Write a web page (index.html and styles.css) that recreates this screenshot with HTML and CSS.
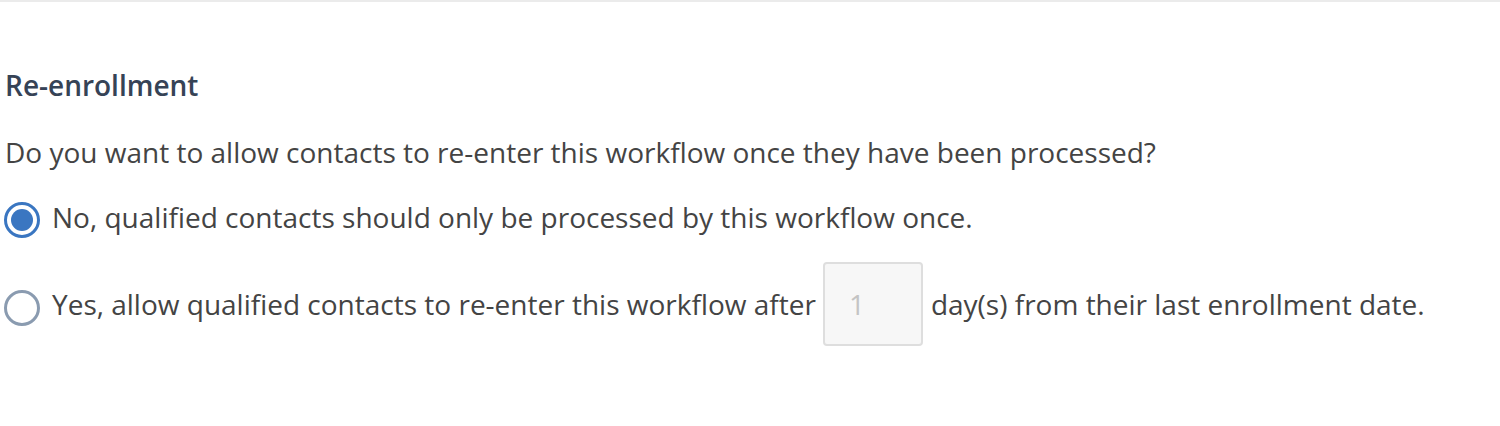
FILE: index.html
```html
<!DOCTYPE html>
<html>
<head>
<meta charset="utf-8">
<link rel="stylesheet" href="styles.css">
</head>
<body>
<div class="page">
  <section class="section">
    <h2 class="title">Re-enrollment</h2>
    <p class="question">Do you want to allow contacts to re-enter this workflow once they have been processed?</p>
    <label class="option option-first">
      <span class="radio radio-on"><span class="dot"></span></span>
      <span class="label">No, qualified contacts should only be processed by this workflow once.</span>
    </label>
    <label class="option option-second">
      <span class="radio radio-off"></span>
      <span class="label">Yes, allow qualified contacts to re-enter this workflow after</span>
      <span class="days">1</span>
      <span class="label">day(s) from their last enrollment date.</span>
    </label>
  </section>
</div>
</body>
</html>
```
FILE: styles.css
```css
html, body {
  margin: 0;
  padding: 0;
  background: #ffffff;
}
.page {
  border-top: 2px solid #ebebeb;
  height: 424px;
  font-family: "Open Sans", "Noto Sans", sans-serif;
}
.section {
  padding: 64px 0 0 4px;
}
.title {
  margin: 0;
  font-size: 28px;
  line-height: 38px;
  font-weight: 600;
  color: #364356;
  padding-left: 1px;
}
.question {
  margin: 29px 0 0 0;
  font-size: 28px;
  line-height: 38px;
  color: #444444;
  padding-left: 1px;
}
.option {
  display: flex;
  align-items: center;
  font-size: 28px;
  line-height: 38px;
  color: #444444;
}
.option-first {
  margin-top: 30px;
}
.option-second {
  margin-top: 23px;
}
.radio {
  box-sizing: border-box;
  width: 36px;
  height: 36px;
  border: 3.5px solid #8a9bb0;
  border-radius: 50%;
  flex: none;
  display: flex;
  align-items: center;
  justify-content: center;
  margin-right: 12px;
}
.radio-on {
  border-color: #3a76c1;
}
.radio-off {
  margin-top: 7px;
}
.dot {
  width: 22px;
  height: 22px;
  border-radius: 50%;
  background: #3a76c1;
}
.option-first .label {
  position: relative;
  top: -3px;
}
.days {
  box-sizing: border-box;
  width: 100px;
  height: 84px;
  margin: 0 8px 0 7px;
  background: #f7f7f7;
  border: 2px solid #dedede;
  border-radius: 4px;
  color: #c4c4c4;
  padding-left: 24px;
  display: flex;
  align-items: center;
}
```
